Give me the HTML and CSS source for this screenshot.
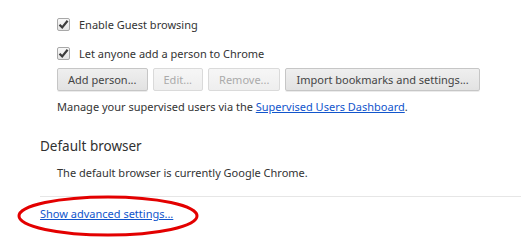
FILE: index.html
```html
<!DOCTYPE html>
<html lang="en">
<head>
	<meta charset="UTF-8">
	<title>Settings</title>
	<link rel="stylesheet" href="styles.css">
</head>
<body>
	<div class="section">
		<div class="options">
			<label class="check-row first">
				<span class="box"><svg width="11" height="11" viewBox="0 0 11 11"><path d="M1.5 5.8 L4.2 8.4 L9.6 1.8" fill="none" stroke="#3c3c3c" stroke-width="2.2"/></svg></span>
				<span>Enable Guest browsing</span>
			</label>
			<label class="check-row">
				<span class="box"><svg width="11" height="11" viewBox="0 0 11 11"><path d="M1.5 5.8 L4.2 8.4 L9.6 1.8" fill="none" stroke="#3c3c3c" stroke-width="2.2"/></svg></span>
				<span>Let anyone add a person to Chrome</span>
			</label>
			<div class="btn-row">
				<button class="btn">Add person...</button>
				<button class="btn" disabled>Edit...</button>
				<button class="btn" disabled>Remove...</button>
				<button class="btn">Import bookmarks and settings...</button>
			</div>
			<p class="note manage">Manage your supervised users via the <a href="#">Supervised Users Dashboard</a>.</p>
		</div>
	</div>

	<div class="section">
		<h3>Default browser</h3>
		<div class="options">
			<p class="note current">The default browser is currently Google Chrome.</p>
		</div>
	</div>

	<div class="footer">
		<a href="#" class="adv">Show advanced settings...</a>
		<svg class="ring" width="182" height="42" viewBox="0 0 182 42"><ellipse cx="91" cy="21" rx="89" ry="19" fill="none" stroke="#e30000" stroke-width="3"/></svg>
	</div>
</body>
</html>
```

FILE: styles.css
```css
*{margin:0; padding:0;}
html, body{min-height:245px;}
body{font-family:"Noto Sans", "Open Sans", sans-serif; font-size:11px; color:#333; background:#fff; overflow:hidden;}
a{color:#15c;}

.section{padding-left:40px;}
.options{padding-left:17px;}

.check-row{display:flex; align-items:center; height:29px;}
.check-row.first{margin-top:10px;}
.box{width:11px; height:11px; border:1px solid #a8a8a8; border-radius:2px; background:linear-gradient(#f8f8f8,#e4e4e4); margin-right:9px; display:flex; align-items:center; justify-content:center;}

.btn-row{display:flex; gap:5px;}
.btn{flex:none; white-space:nowrap; font-family:inherit; font-size:11px; height:23px; padding:0 10px; color:#444; border:1px solid #c6c6c6; border-radius:2px; background:linear-gradient(#efefef,#e2e2e2); box-shadow:0 1px 0 rgba(0,0,0,0.08);}
.btn[disabled]{color:#aaa; border-color:#dadada; background:linear-gradient(#f6f6f6,#eeeeee); box-shadow:none;}

.note{line-height:16px;}
.manage{margin-top:8px;}

h3{font-weight:normal; font-size:13.5px; color:#303030; margin-top:21px; line-height:20px;}
.current{margin-top:9px;}

.footer{position:relative; margin:15px 0 0 40px; border-top:1px solid #e6e6e6; padding:9px 0 30px;}
.adv{line-height:16px;}
.ring{position:absolute; left:-23px; top:-2px;}
```
